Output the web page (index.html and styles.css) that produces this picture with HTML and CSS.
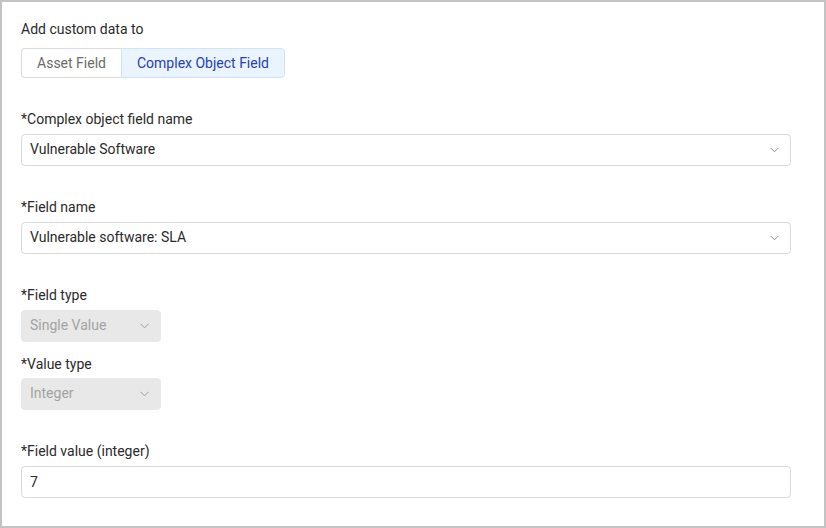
FILE: index.html
```html
<!DOCTYPE html>
<html>
<head>
<meta charset="utf-8">
<link rel="stylesheet" href="styles.css">
</head>
<body>
<div class="frame">
  <div class="field field-first">
    <div class="label">Add custom data to</div>
    <div class="seg">
      <div class="seg-btn">Asset Field</div>
      <div class="seg-btn seg-active">Complex Object Field</div>
    </div>
  </div>
  <div class="field field-wide">
    <div class="label">*Complex object field name</div>
    <div class="select">
      <span>Vulnerable Software</span>
      <svg class="chev" width="9" height="6" viewBox="0 0 9 6"><path d="M0.5 0.8 L4.5 4.8 L8.5 0.8" fill="none" stroke="#8c8c8c" stroke-width="1"/></svg>
    </div>
  </div>
  <div class="field field-wide">
    <div class="label">*Field name</div>
    <div class="select">
      <span>Vulnerable software: SLA</span>
      <svg class="chev" width="9" height="6" viewBox="0 0 9 6"><path d="M0.5 0.8 L4.5 4.8 L8.5 0.8" fill="none" stroke="#8c8c8c" stroke-width="1"/></svg>
    </div>
  </div>
  <div class="field field-type">
    <div class="label label-type">*Field type</div>
    <div class="select select-disabled">
      <span>Single Value</span>
      <svg class="chev" width="9" height="6" viewBox="0 0 9 6"><path d="M0.5 0.8 L4.5 4.8 L8.5 0.8" fill="none" stroke="#9a9a9a" stroke-width="1"/></svg>
    </div>
  </div>
  <div class="field field-value-type">
    <div class="label label-tight">*Value type</div>
    <div class="select select-disabled">
      <span>Integer</span>
      <svg class="chev" width="9" height="6" viewBox="0 0 9 6"><path d="M0.5 0.8 L4.5 4.8 L8.5 0.8" fill="none" stroke="#9a9a9a" stroke-width="1"/></svg>
    </div>
  </div>
  <div class="field field-last">
    <div class="label label-input">*Field value (integer)</div>
    <div class="input">7</div>
  </div>
</div>
</body>
</html>
```
FILE: styles.css
```css
* { box-sizing: border-box; }
html, body { margin: 0; padding: 0; background: #ffffff; }
body {
  font-family: Roboto, "Liberation Sans", Arial, sans-serif;
  font-size: 14px;
  color: #2b2b2b;
}
.frame {
  width: 826px;
  height: 528px;
  border: 2px solid #c3c3c3;
  padding: 17px 33px 0 19px;
  display: flex;
  flex-direction: column;
}
.label {
  line-height: 20px;
  height: 20px;
  margin-bottom: 5px;
  color: #2b2b2b;
}
.field-first .label { margin-bottom: 9px; }
.field-wide { margin-top: 31px; }
.field-type { margin-top: 31px; }
.field-value-type { margin-top: 12px; }
.field-last { margin-top: 31px; }
.label-type { margin-bottom: 5px; }
.label-tight { margin-bottom: 4px; }
.label-input { margin-bottom: 5px; }

.seg {
  display: flex;
  height: 30px;
}
.seg-btn {
  display: flex;
  align-items: center;
  justify-content: center;
  height: 30px;
  border: 1px solid #dcdcdc;
  color: #6b6b6b;
  line-height: 20px;
  padding-bottom: 1px;
}
.seg-btn:first-child {
  width: 100px;
  border-radius: 4px 0 0 4px;
  border-right: none;
}
.seg-active {
  width: 164px;
  background: #eaf4fe;
  border-color: #cfe3f8;
  color: #2740b8;
  border-radius: 0 4px 4px 0;
}
.select, .input {
  height: 32px;
  border: 1px solid #d9d9d9;
  border-radius: 4px;
  padding: 0 8px 2px 8px;
  display: flex;
  align-items: center;
  justify-content: space-between;
  background: #ffffff;
  color: #2b2b2b;
}
.input { padding-bottom: 0; }
.select .chev { margin-right: 3px; margin-top: 2px; }
.select-disabled {
  width: 140px;
  background: #e8e8e8;
  border-color: #e8e8e8;
  color: #a3a3a3;
}
```
